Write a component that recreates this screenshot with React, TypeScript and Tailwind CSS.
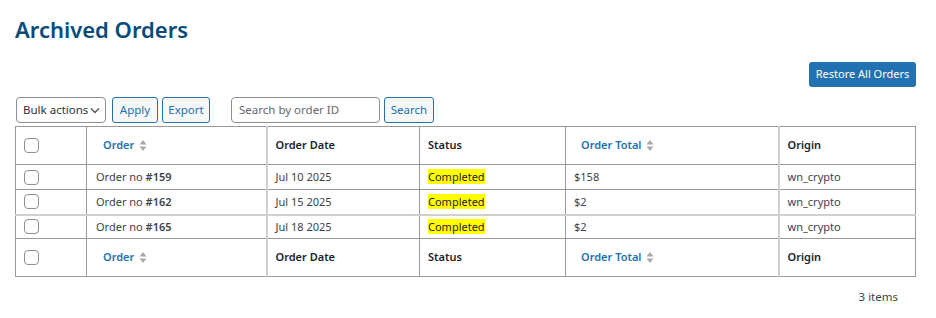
import React from "react";

type OrderRow = {
  id: number;
  date: string;
  total: string;
  origin: string;
};

const rows: OrderRow[] = [
  { id: 159, date: "Jul 10 2025", total: "$158", origin: "wn_crypto" },
  { id: 162, date: "Jul 15 2025", total: "$2", origin: "wn_crypto" },
  { id: 165, date: "Jul 18 2025", total: "$2", origin: "wn_crypto" },
];

const Checkbox = () => (
  <span className="block size-[15px] rounded-[4px] border border-[#8c8f94] bg-white" />
);

const SortIcon = () => (
  <svg width="8" height="13" viewBox="0 0 8 13" className="ml-[5px] inline-block">
    <path d="M4 1 L7.5 5.5 H0.5 Z" fill="#a7aaad" />
    <path d="M4 12 L7.5 7.5 H0.5 Z" fill="#a7aaad" />
  </svg>
);

const HeaderRow = ({ top }: { top?: boolean }) => (
  <tr className={top ? "border-b border-[#999]" : "border-t border-[#999]"}>
    <td className="h-[38px] w-[71px] border-r border-[#999] pl-[8px] align-middle">
      <Checkbox />
    </td>
    <th className="w-[180px] border-r-2 border-[#cfcfcf] pl-[16px] text-left font-semibold">
      <span className="inline-flex items-center text-[#2271b1]">
        Order
        <SortIcon />
      </span>
    </th>
    <th className="w-[153px] border-r border-[#999] pl-[8px] text-left font-semibold">
      Order Date
    </th>
    <th className="w-[146px] border-r border-[#999] pl-[8px] text-left font-semibold">
      Status
    </th>
    <th className="w-[213px] border-r-2 border-[#cfcfcf] pl-[15px] text-left font-semibold">
      <span className="inline-flex items-center text-[#2271b1]">
        Order Total
        <SortIcon />
      </span>
    </th>
    <th className="pl-[8px] text-left font-semibold">Origin</th>
  </tr>
);

export default function App() {
  return (
    <div
      className="min-h-[318px] w-[936px] bg-white px-[15px] text-[11px] text-[#2c3338]"
      style={{ fontFamily: '"Noto Sans", "Open Sans", sans-serif' }}
    >
      <h1 className="pt-[13px] text-[22px] font-semibold leading-[32px] text-[#0a4b78]">
        Archived Orders
      </h1>

      <div className="mt-[17px] flex justify-end pr-[5px]">
        <button className="h-[25px] w-[107px] whitespace-nowrap rounded-[3px] bg-[#2271b1] text-[11px] text-white">
          Restore All Orders
        </button>
      </div>

      <div className="mt-[10px] flex items-center pl-[1px]">
        <div className="flex h-[26px] w-[90px] items-center justify-between whitespace-nowrap rounded-[4px] border border-[#8c8f94] pl-[6px] pr-[5px] text-[11.5px] text-[#2c3338]">
          Bulk actions
          <svg width="10" height="7" viewBox="0 0 10 7">
            <path d="M1 1.5 L5 5.5 L9 1.5" stroke="#50575e" strokeWidth="1.4" fill="none" />
          </svg>
        </div>
        <button className="ml-[6px] h-[26px] w-[46px] rounded-[3px] border border-[#2271b1] bg-[#f6f7f7] text-[11.5px] text-[#2271b1]">
          Apply
        </button>
        <button className="ml-[4px] h-[26px] w-[48px] rounded-[3px] border border-[#2271b1] bg-[#f6f7f7] text-[11.5px] text-[#2271b1]">
          Export
        </button>
        <div className="ml-[21px] flex h-[26px] w-[149px] items-center whitespace-nowrap rounded-[4px] border border-[#8c8f94] px-[7px] text-[11.5px] text-[#646970]">
          Search by order ID
        </div>
        <button className="ml-[4px] h-[26px] w-[50px] rounded-[3px] border border-[#2271b1] bg-[#f6f7f7] text-[11.5px] text-[#2271b1]">
          Search
        </button>
      </div>

      <table className="mt-[3px] w-[901px] table-fixed border-collapse border border-[#999] text-[#1d2327]">
        <thead>
          <HeaderRow top />
        </thead>
        <tbody>
          {rows.map((row, i) => (
            <tr
              key={row.id}
              className={
                i === 1 ? "border-b-2 border-[#d0d0d0]" : i === 0 ? "border-b border-[#999]" : ""
              }
            >
              <td
                className={
                  i === 2
                    ? "h-[24px] border-r border-[#999] pl-[8px] align-middle"
                    : "h-[25px] border-r border-[#999] pl-[8px] align-middle"
                }
              >
                <Checkbox />
              </td>
              <td className="border-r-2 border-[#cfcfcf] pl-[9px] text-[#3c434a]">
                Order no <span className="font-semibold">#{row.id}</span>
              </td>
              <td className="border-r border-[#999] pl-[8px] text-[#3c434a]">{row.date}</td>
              <td className="border-r border-[#999] pl-[8px]">
                <span className="bg-[#ffff00] text-[#1d2327]">Completed</span>
              </td>
              <td className="border-r-2 border-[#cfcfcf] pl-[8px] text-[#3c434a]">{row.total}</td>
              <td className="pl-[8px] text-[#3c434a]">{row.origin}</td>
            </tr>
          ))}
        </tbody>
        <tfoot>
          <HeaderRow />
        </tfoot>
      </table>

      <div className="mt-[11px] flex justify-end pr-[23px] text-[11.5px] text-[#3c434a]">
        3 items
      </div>
    </div>
  );
}
